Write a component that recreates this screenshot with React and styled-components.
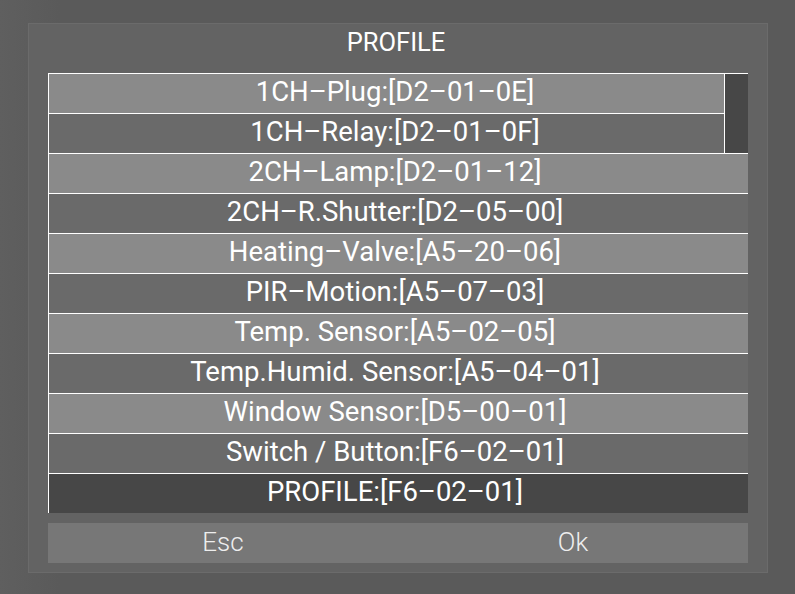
import React from "react";
import styled, { createGlobalStyle } from "styled-components";

const Global = createGlobalStyle`
  html, body { margin: 0; padding: 0; background: #5a5a5a; }
  body { font-family: Roboto, "Liberation Sans", sans-serif; }
`;

const Page = styled.div`
  width: 795px;
  height: 594px;
  box-sizing: border-box;
  padding: 23px 0 0 28px;
  background: linear-gradient(90deg, #5f5f5f 0px, #5a5a5a 60px);
`;

const Dialog = styled.div`
  width: 740px;
  height: 550px;
  box-sizing: border-box;
  border: 1px solid #6b6b6b;
  background: #636363;
  padding: 0 19px 9px;
  display: flex;
  flex-direction: column;
`;

const Title = styled.div`
  height: 36px;
  line-height: 36px;
  font-size: 25.5px;
  color: #ffffff;
  text-align: center;
  padding-right: 4px;
  margin-bottom: 13px;
`;

const List = styled.div`
  position: relative;
  border-left: 1px solid #ffffff;
  display: flex;
  flex-direction: column;
`;

const Row = styled.div`
  height: 39px;
  border-top: 1px solid #ffffff;
  background: ${(p) => (p.$selected ? "#474747" : p.$light ? "#8a8a8a" : "#6a6a6a")};
  color: #ffffff;
  font-size: 27.5px;
  line-height: 36px;
  text-align: center;
  padding-right: 7px;
  white-space: nowrap;
  overflow: hidden;
`;

const Scrollbar = styled.div`
  position: absolute;
  top: 1px;
  right: 0;
  width: 23px;
  height: 79px;
  background: #474747;
  border-left: 1px solid #ffffff;
`;

const Buttons = styled.div`
  margin-top: 10px;
  height: 40px;
  display: grid;
  grid-template-columns: 1fr 1fr;
  background: #777777;
`;

const Button = styled.div`
  font-size: 26px;
  font-weight: 300;
  color: #eeeeee;
  text-align: center;
  line-height: 38px;
`;

const items = [
  "1CH–Plug:[D2–01–0E]",
  "1CH–Relay:[D2–01–0F]",
  "2CH–Lamp:[D2–01–12]",
  "2CH–R.Shutter:[D2–05–00]",
  "Heating–Valve:[A5–20–06]",
  "PIR–Motion:[A5–07–03]",
  "Temp. Sensor:[A5–02–05]",
  "Temp.Humid. Sensor:[A5–04–01]",
  "Window Sensor:[D5–00–01]",
  "Switch / Button:[F6–02–01]",
];

export default function App() {
  return (
    <>
      <Global />
      <Page>
        <Dialog>
          <Title>PROFILE</Title>
          <List>
            {items.map((t, i) => (
              <Row key={i} $light={i % 2 === 0}>
                {t}
              </Row>
            ))}
            <Row $selected>PROFILE:[F6–02–01]</Row>
            <Scrollbar />
          </List>
          <Buttons>
            <Button>Esc</Button>
            <Button>Ok</Button>
          </Buttons>
        </Dialog>
      </Page>
    </>
  );
}
